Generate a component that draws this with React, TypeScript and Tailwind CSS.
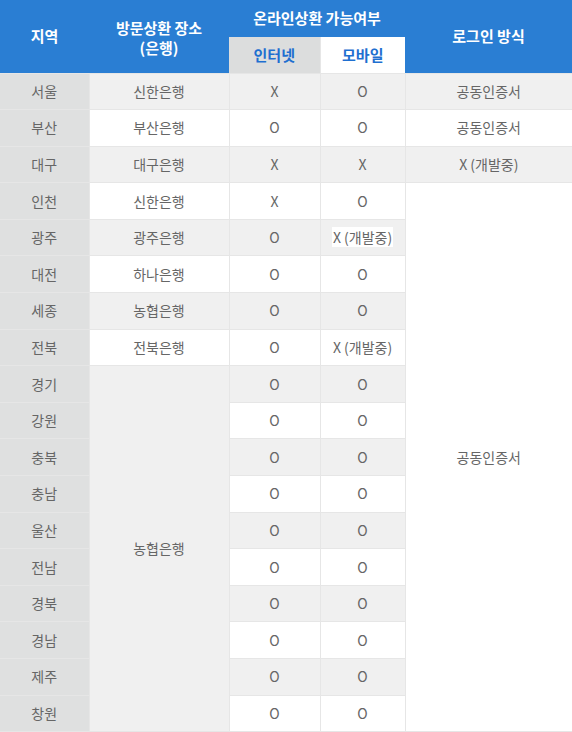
import React from "react";

type Row = {
  region: string;
  bank?: string;
  bankSpan?: number;
  internet: string;
  mobile: string;
  mobileHL?: boolean;
  login?: string;
  loginSpan?: number;
};

const rows: Row[] = [
  { region: "서울", bank: "신한은행", internet: "X", mobile: "O", login: "공동인증서" },
  { region: "부산", bank: "부산은행", internet: "O", mobile: "O", login: "공동인증서" },
  { region: "대구", bank: "대구은행", internet: "X", mobile: "X", login: "X (개발중)" },
  { region: "인천", bank: "신한은행", internet: "X", mobile: "O", login: "공동인증서", loginSpan: 15 },
  { region: "광주", bank: "광주은행", internet: "O", mobile: "X (개발중)", mobileHL: true },
  { region: "대전", bank: "하나은행", internet: "O", mobile: "O" },
  { region: "세종", bank: "농협은행", internet: "O", mobile: "O" },
  { region: "전북", bank: "전북은행", internet: "O", mobile: "X (개발중)" },
  { region: "경기", bank: "농협은행", bankSpan: 10, internet: "O", mobile: "O" },
  { region: "강원", internet: "O", mobile: "O" },
  { region: "충북", internet: "O", mobile: "O" },
  { region: "충남", internet: "O", mobile: "O" },
  { region: "울산", internet: "O", mobile: "O" },
  { region: "전남", internet: "O", mobile: "O" },
  { region: "경북", internet: "O", mobile: "O" },
  { region: "경남", internet: "O", mobile: "O" },
  { region: "제주", internet: "O", mobile: "O" },
  { region: "창원", internet: "O", mobile: "O" },
];

export default function App() {
  const font = { fontFamily: '"Noto Sans CJK KR", "Noto Sans", sans-serif' };
  return (
    <div className="w-[572px] h-[732px] overflow-hidden bg-white" style={font}>
      <table className="w-[572px] border-collapse table-fixed text-[14px] text-[#666]">
        <colgroup>
          <col className="w-[89px]" />
          <col className="w-[140px]" />
          <col className="w-[91px]" />
          <col className="w-[85px]" />
          <col className="w-[167px]" />
        </colgroup>
        <thead>
          <tr className="h-[37px]">
            <th rowSpan={2} className="bg-[#2a7ed3] text-white text-[15px] font-bold text-center align-middle">
              지역
            </th>
            <th rowSpan={2} className="bg-[#2a7ed3] text-white text-[15px] font-bold text-center align-middle leading-[20px] pt-[3px]">
              방문상환 장소
              <br />
              (은행)
            </th>
            <th colSpan={2} className="bg-[#2a7ed3] text-white text-[15px] font-bold text-center align-middle">
              온라인상환 가능여부
            </th>
            <th rowSpan={2} className="bg-[#2a7ed3] text-white text-[15px] font-bold text-center align-middle">
              로그인 방식
            </th>
          </tr>
          <tr className="h-[36px]">
            <th className="bg-[#dcdddd] text-[#1f6fd0] text-[15px] font-bold text-center border-r border-[#e6e6e6]">
              인터넷
            </th>
            <th className="bg-white text-[#1f6fd0] text-[15px] font-bold text-center">
              <span className="text-[#1f6fd0]">모바일</span>
            </th>
          </tr>
        </thead>
        <tbody>
          {rows.map((r, i) => {
            const odd = i % 2 === 0;
            const bg = odd ? "bg-[#f0f0f0]" : "bg-white";
            return (
              <tr key={r.region} className="h-[36.6px]">
                <td className="bg-[#dfe0e0] text-center border border-[#e6e6e6] border-l-0">{r.region}</td>
                {r.bank !== undefined && (
                  <td
                    rowSpan={r.bankSpan}
                    className={`${r.bankSpan ? "bg-[#f0f0f0]" : bg} text-center border border-[#e6e6e6]`}
                  >
                    {r.bank}
                  </td>
                )}
                <td className={`${bg} text-center border border-[#e6e6e6]`}>{r.internet}</td>
                <td className={`${bg} text-center border border-[#e6e6e6]`}>
                  {r.mobileHL ? <span className="bg-white px-[1px]">{r.mobile}</span> : r.mobile}
                </td>
                {r.login !== undefined && (
                  <td
                    rowSpan={r.loginSpan}
                    className={`${r.loginSpan ? "bg-white" : bg} text-center border border-[#e6e6e6] border-r-0`}
                  >
                    {r.login}
                  </td>
                )}
              </tr>
            );
          })}
        </tbody>
      </table>
    </div>
  );
}
